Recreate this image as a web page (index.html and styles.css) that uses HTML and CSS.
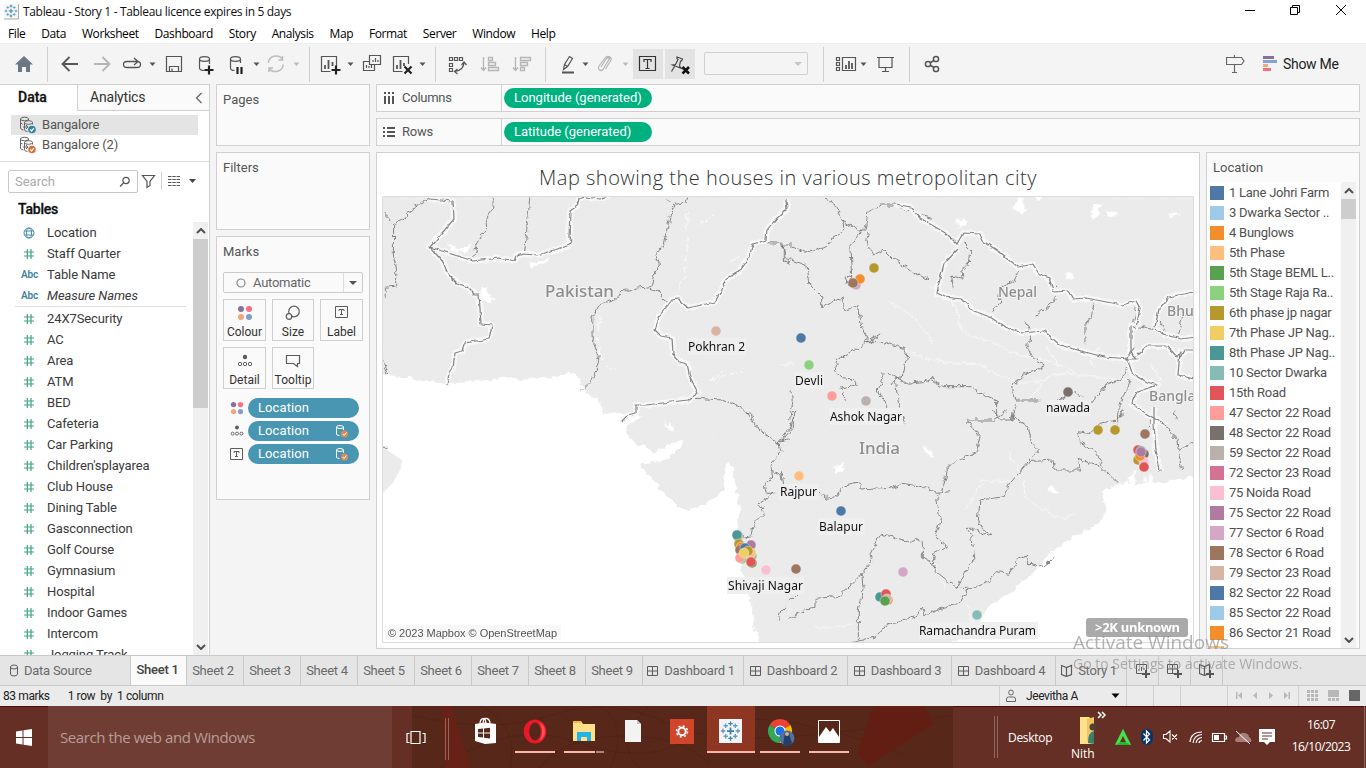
FILE: index.html
```html
<!DOCTYPE html>
<html lang="en">
<head>
<meta charset="utf-8">
<title>Tableau - Story 1</title>
<link rel="stylesheet" href="styles.css">
</head>
<body>
<svg class="defs" width="0" height="0">
  <defs>
    <symbol id="num" viewBox="0 0 12 12"><path d="M1 4h10M1 8h10M4.300 1v10M8 1v10" fill="none" stroke="#3fa582" stroke-width="1.200"/></symbol>
    <symbol id="globe" viewBox="0 0 12 12"><g fill="none" stroke="#4a8ba5"><circle cx="6" cy="6" r="5"/><ellipse cx="6" cy="6" rx="2.500" ry="5"/><path d="M1.500 4h9M1.500 8h9"/></g></symbol>
    <symbol id="dots" viewBox="0 0 16 16"><circle cx="4" cy="4" r="3" fill="#8a6f9a"/><circle cx="12" cy="4" r="3" fill="#fa6e82"/><circle cx="4" cy="12" r="3" fill="#f2a77c"/><circle cx="12" cy="12" r="3" fill="#7f9fc8"/></symbol>
    <symbol id="detail" viewBox="0 0 16 16"><circle cx="8" cy="4" r="2.200" fill="#5c5c5c"/><g fill="none" stroke="#5c5c5c"><circle cx="3" cy="11" r="1.700"/><circle cx="8" cy="11" r="1.700"/><circle cx="13" cy="11" r="1.700"/></g></symbol>
    <symbol id="tbox" viewBox="0 0 14 14"><path d="M.5 1.500h12v11H.5zM4 6V4.500h5V6M6.500 4.500v5M5 9.500h3" fill="none" stroke="#5c5c5c"/></symbol>
    <symbol id="dbcheck" viewBox="0 0 14 14"><path d="M1.500 3v7q0 1.500 3 1.500M1.500 3q0-1.500 3.500-1.500T8.500 3v3M1.500 3q0 1.500 3.500 1.500T8.500 3" fill="none" stroke="#fff"/><circle cx="9.500" cy="10" r="3.600" fill="#d98b59"/><path d="m7.800 10 1.300 1.400L11.500 8.500" fill="none" stroke="#fff"/></symbol>
    <symbol id="ds" viewBox="0 0 18 18"><g fill="none" stroke="#666"><ellipse cx="5.500" cy="3" rx="4" ry="1.800"/><path d="M1.500 3v9q0 1.500 3 2M9.500 3v1.500M1.500 7l2 1"/><ellipse cx="9.500" cy="6.500" rx="4" ry="1.800"/><path d="M5.500 6.500v7q0 2 3 2M13.500 6.500v2M4 11h5M7 9l2 2-2 2"/></g><circle cx="13" cy="13.500" r="3.800" fill="var(--badge)"/><path d="m11.200 13.500 1.400 1.500 2.300-2.800" fill="none" stroke="#fff" stroke-width="1.200"/></symbol>
    <symbol id="dash" viewBox="0 0 12 12"><path d="M.5 1.500h10v9H.5zM5.500 1.500v9M.5 6h10" fill="none" stroke="#5c5c5c"/></symbol>
    <symbol id="book" viewBox="0 0 12 13"><path d="m.5 1.500 5 2 5-2v9l-5 2-5-2zM5.500 3.500v9" fill="none" stroke="#5c5c5c" stroke-width="1.200"/></symbol>
    <symbol id="plus" viewBox="0 0 8 8"><path d="M4 0v8M0 4h8" stroke="#555" stroke-width="2"/></symbol>
    <symbol id="tab" viewBox="-12 -12 24 24"><g stroke-width="1.500"><path d="M0-4v8M-4 0h8" stroke="#3c82ad" stroke-width="2"/><path d="M0-11v5M-2.500-8.500h5M0 6v5M-2.500 8.500h5" stroke="#477fa6"/><path d="M-11 0h5M-8.500-2.500v5M6 0h5M8.500-2.500v5" stroke="#6796b8"/><path d="M-8-6h5M-5.500-8.500v5M3-6h5M5.500-8.500v5M-8 6h5M-5.500 3.500v5M3 6h5M5.500 3.500v5" stroke="#5ba1cb"/></g></symbol>
    <symbol id="up" viewBox="0 0 10 6"><path d="m1 5 4-4 4 4" fill="none" stroke="#505050" stroke-width="2"/></symbol>
    <filter id="jag" x="-5%" y="-5%" width="110%" height="110%"><feTurbulence type="fractalNoise" baseFrequency=".16" numOctaves="2" seed="4"/><feDisplacementMap in="SourceGraphic" scale="7" xChannelSelector="R" yChannelSelector="G"/></filter>
    <filter id="soft" x="-5%" y="-5%" width="110%" height="110%"><feTurbulence type="fractalNoise" baseFrequency=".16" numOctaves="2" seed="4"/><feDisplacementMap in="SourceGraphic" scale="4" xChannelSelector="R" yChannelSelector="G"/></filter>
    <filter id="relief" x="0" y="0" width="100%" height="100%"><feTurbulence type="fractalNoise" baseFrequency=".018 .022" numOctaves="4" seed="9"/><feColorMatrix values="0 0 0 0 .82  0 0 0 0 .82  0 0 0 0 .82  1.600 0 0 0 -.62"/></filter>
  </defs>
</svg>

<header class="titlebar">
  <svg class="logo" width="17" height="17" viewBox="0 0 17 17"><path d="M.5.500h15v15H.5z" fill="#f7f7f7"/><path d="M15.500 1v15H1" fill="none" stroke="#aaa"/><use href="#tab" x="1" y="1" width="14" height="14"/></svg>
  <span class="apptitle">Tableau - Story 1 - Tableau licence expires in 5 days</span>
  <svg class="winctl" width="116" height="24" viewBox="1238 0 116 24"><path d="M1245 10.500h10M1290.500 7.500h7v7h-7zM1292.500 7.500v-2h7v7h-2M1336 5l10 10M1346 5l-10 10" fill="none" stroke="#000"/></svg>
</header>
<nav class="menu"><span>File</span><span>Data</span><span>Worksheet</span><span>Dashboard</span><span>Story</span><span>Analysis</span><span>Map</span><span>Format</span><span>Server</span><span>Window</span><span>Help</span></nav>

<div class="toolbar">
  <svg width="48" height="41" viewBox="0 43 48 41"><path d="m24 56 9 8.500h-3V72h-4v-5h-4v5h-4v-7.500h-3z" fill="#6b7785"/><path d="M47.500 47v35" stroke="#cfcfcf"/></svg>
  <svg width="262" height="41" viewBox="48 43 262 41">
    <g fill="none" stroke="#555" stroke-width="1.200">
      <path d="M78 64H63M69.500 57 62.500 64l7 7" stroke-width="1.800"/><path d="M94 64h15M102.500 57l7 7-7 7" stroke="#b5b5b5" stroke-width="1.800"/>
      <path d="M133 67.500h4q3.500 0 3.500-3t-3.500-3M130 67.500h-3q-3.500 0-3.500-3t3.500-3h10M134 58l4 3.500-4 3.500M130 67.500h4" stroke-width="1.300"/>
      <path d="M166.500 56.500h15v15h-15zM169.500 71v-4.500h9V71M172 71v-2.500"/>
      <path d="M199.500 59v9q0 2.500 5 2.500M199.500 59q0-2.300 5-2.300t5 2.300v5M199.500 59q0 2.300 5 2.300t5-2.300"/><path d="M204.500 70h9M209 65.500v9" stroke="#222" stroke-width="2.200"/>
      <path d="M230.500 59v9q0 2.500 4 2.500M230.500 59q0-2.300 5-2.300t5 2.300v4M230.500 59q0 2.300 5 2.300t5-2.300"/><path d="M237.500 67v7M241.500 67v7" stroke="#222" stroke-width="2.200"/>
      <path d="M268.500 63a7.500 7 0 0 1 14-3.500M282.500 56v4h-4M283 64.500a7.500 7 0 0 1-14 3.500M269 72v-4h4" stroke="#bcbcbc" stroke-width="1.500"/>
    </g>
    <path d="M149.500 62.500h6l-3 3.500zM253.500 62.500h6l-3 3.500z" fill="#555"/><path d="M293.500 62.500h6l-3 3.500z" fill="#bbb"/><path d="M309.500 47v35" stroke="#cfcfcf"/>
  </svg>
  <svg width="126" height="41" viewBox="310 43 126 41">
    <g fill="none" stroke="#555" stroke-width="1.200">
      <path d="M336.500 66V56.500h-15v15h9"/><path d="M325 69v-4M328.500 69v-9M332.500 66v-4" stroke-width="1.800"/><path d="M331.500 70h9M336 65.500v9" stroke="#222" stroke-width="2.200"/>
      <path d="M369.500 55.500h11v9h-11zM369 61.500h-5.500v9h11V65M373 62v-2M375.500 62v-4M378 62v-2M366.500 68v-3M369 68v-2M371.500 68v-3"/>
      <path d="M408.500 64v-7.500h-15v15h9"/><path d="M397 69v-4M400.500 69v-9M404 66v-3" stroke-width="1.800"/><path d="m404.500 66.500 7 7m0-7-7 7" stroke="#222" stroke-width="2.200"/>
    </g><path d="M347.500 62.500h6l-3 3.500zM419.500 62.500h6l-3 3.500z" fill="#555"/><path d="M435.500 47v35" stroke="#cfcfcf"/>
  </svg>
  <svg width="110" height="41" viewBox="436 43 110 41">
    <g fill="none" stroke="#555">
      <path d="M449.500 57.500h3v3h-3zM454.500 57.500h3v3h-3zM459.500 57.500h3v3h-3zM449.500 63.500h3v3h-3zM449.500 68.500h3v3h-3zM464 62q0 8-9 9.500M461.500 65l2.500-3 2.500 3M457.500 69l-3 2.500 3 2.500" stroke-width="1.200"/>
      <g stroke="#b5b5b5" stroke-width="1.300"><path d="M483.500 57v13M481 67.500l2.500 3 2.500-3M488.500 57.500h4v3h-4zM488.500 62.500h7v3h-7zM488.500 67.500h10v3h-10zM515.500 57v13M513 67.500l2.500 3 2.500-3M520.500 57.500h10v3h-10zM520.500 62.500h7v3h-7zM520.500 67.500h4v3h-4z"/></g>
    </g><path d="M545.500 47v35" stroke="#cfcfcf"/>
  </svg>
  <svg width="158" height="41" viewBox="546 43 158 41">
    <path d="M633 49h30v30h-30zM665 49h30v30h-30z" fill="#e3e3e3"/>
    <g fill="none" stroke="#555" stroke-width="1.200"><path d="m563.500 69.500 1-5 5-8 3 2-5 8zM564.500 64.500l3 2"/><path d="M562 72.500h12" stroke-width="2"/>
      <path d="m601 67 5.500-8.500q1.500-1.500 3 0l-6.500 11q-2 2-4 0-1-2 0-3.500l6-8q2-2.500 5-1 2 2 .5 4l-5 8" stroke="#b5b5b5"/>
      <path d="M639.500 56.500h16v14h-16zM644 62v-2.500h7V62M647.500 59.500v9M645.500 68.500h4" stroke="#333"/>
      <path d="m677 57 5.500 2-1 2h-1l-1 5 2 2.500-9-3.500 3-.5 2.500-5-1-1zM674.500 66.500l-3 5" stroke="#444"/><path d="m682.500 67 6.500 6.500m0-6.500-6.500 6.500" stroke="#111" stroke-width="2.500"/></g>
    <path d="M582.500 62.500h6l-3 3.500z" fill="#555"/><path d="M622.500 62.500h6l-3 3.500z" fill="#bbb"/>
  </svg>
  <div class="combo"><i class="caret"></i></div>
  <svg class="tail" width="132" height="41" viewBox="823 43 132 41"><path d="M823.500 47v35M909.500 47v35" stroke="#cfcfcf"/>
    <g fill="none" stroke="#555" stroke-width="1.200"><path d="M836.500 57.500h3v3h-3zM836.500 62.500h3v3h-3zM836.500 67.500h3v3h-3zM842.500 57.500h13v13h-13z"/><path d="M846 69v-4M849 69v-8M852 69v-6" stroke-width="1.800"/><path d="M877 57.500h17M879 58v9.500h13V58M885.500 67.500v4M882 71.500h7"/><g stroke-width="1.500"><circle cx="928" cy="64" r="2.600"/><circle cx="936" cy="59" r="2.600"/><circle cx="936" cy="69" r="2.600"/><path d="m930.500 62.500 3.500-2M930.500 65.500l3.500 2"/></g></g><path d="M860.500 62.500h6l-3 3.500z" fill="#555"/></svg>
  <svg class="guide" width="52" height="41" viewBox="1226 43 52 41"><path d="M1226.500 57.500h15l2.500 3.500-2.500 3.500h-15zM1234.500 55v2M1234.500 65v7M1232 72.500h5" fill="none" stroke="#666" stroke-width="1.200"/><path d="M1263 56h11v3h-11z" fill="#87719a"/><path d="M1263 60h14v3h-14z" fill="#82a3cd"/><path d="M1263 64h5v3h-5z" fill="#f5a97f"/><path d="M1263 68h8v3h-8z" fill="#fb6b80"/></svg>
  <span class="showme">Show Me</span>
</div>

<main class="work">
  <aside class="data">
    <div class="dtabs"><b>Data</b><span>Analytics<svg width="8" height="12" viewBox="0 0 8 12"><path d="M6.500 1 1.500 6l5 5" fill="none" stroke="#666" stroke-width="1.300"/></svg></span></div>
    <div class="sources">
      <div class="src sel"><svg class="blue" width="18" height="18"><use href="#ds"/></svg>Bangalore</div>
      <div class="src"><svg class="orange" width="18" height="18"><use href="#ds"/></svg>Bangalore (2)</div>
    </div>
    <div class="searchrow">
      <div class="search">Search<svg width="12" height="12" viewBox="0 0 12 12"><circle cx="7" cy="4.500" r="3.200" fill="none" stroke="#555" stroke-width="1.200"/><path d="M4.500 7 1 10.500" stroke="#555" stroke-width="1.300"/></svg></div>
      <svg width="58" height="24" viewBox="140 170 58 24"><path d="M142.500 175.500h12l-4.500 6v4l-3 2v-6z" fill="none" stroke="#555" stroke-width="1.200"/><path d="M161.500 172v18" stroke="#d0d0d0"/><path d="M168 176.500h12M168 179.500h12M168 182.500h12M168 185.500h12" stroke="#555" stroke-dasharray="3.500 .8"/><path d="M189 179h7l-3.500 4z" fill="#444"/></svg>
    </div>
    <h2>Tables</h2>
    <div class="fieldwrap">
      <ul class="fields">
        <li><svg><use href="#globe"/></svg>Location</li><li><svg><use href="#num"/></svg>Staff Quarter</li><li><b>Abc</b>Table Name</li><li class="mn"><b>Abc</b><i>Measure Names</i></li>
        <li><svg><use href="#num"/></svg>24X7Security</li><li><svg><use href="#num"/></svg>AC</li><li><svg><use href="#num"/></svg>Area</li><li><svg><use href="#num"/></svg>ATM</li><li><svg><use href="#num"/></svg>BED</li><li><svg><use href="#num"/></svg>Cafeteria</li><li><svg><use href="#num"/></svg>Car Parking</li><li><svg><use href="#num"/></svg>Children'splayarea</li><li><svg><use href="#num"/></svg>Club House</li><li><svg><use href="#num"/></svg>Dining Table</li><li><svg><use href="#num"/></svg>Gasconnection</li><li><svg><use href="#num"/></svg>Golf Course</li><li><svg><use href="#num"/></svg>Gymnasium</li><li><svg><use href="#num"/></svg>Hospital</li><li><svg><use href="#num"/></svg>Indoor Games</li><li><svg><use href="#num"/></svg>Intercom</li><li><svg><use href="#num"/></svg>Jogging Track</li>
      </ul>
      <div class="scroll"><svg width="10" height="6"><use href="#up"/></svg><i></i><svg class="down" width="10" height="6"><use href="#up"/></svg></div>
    </div>
  </aside>

  <section class="cards">
    <div class="card pages">Pages</div>
    <div class="card filters">Filters</div>
    <div class="card marks">Marks
      <div class="select"><svg width="10" height="10" viewBox="0 0 10 10"><circle cx="5" cy="5" r="4" fill="none" stroke="#888" stroke-width="1.200"/></svg><span>Automatic</span><i class="caret"></i></div>
      <div class="btns">
        <div><svg width="16" height="16"><use href="#dots"/></svg>Colour</div>
        <div><svg width="16" height="16" viewBox="0 0 16 16"><g fill="none" stroke="#5c5c5c" stroke-width="1.200"><circle cx="9" cy="6.500" r="5.300"/><circle cx="4" cy="11.500" r="2.800" fill="#fafafa"/></g></svg>Size</div>
        <div><svg width="14" height="14"><use href="#tbox"/></svg>Label</div>
        <div><svg width="16" height="16"><use href="#detail"/></svg>Detail</div>
        <div><svg width="16" height="16" viewBox="0 0 16 16"><path d="M1.500 2.500h13v8h-2v3l-4-3h-7z" fill="none" stroke="#5c5c5c" stroke-width="1.200"/></svg>Tooltip</div>
      </div>
      <div class="mrow"><svg width="16" height="16"><use href="#dots"/></svg><div class="pill">Location</div></div>
      <div class="mrow"><svg width="16" height="16"><use href="#detail"/></svg><div class="pill">Location<svg width="14" height="14"><use href="#dbcheck"/></svg></div></div>
      <div class="mrow"><svg width="14" height="14"><use href="#tbox"/></svg><div class="pill">Location<svg width="14" height="14"><use href="#dbcheck"/></svg></div></div>
    </div>
  </section>

  <section class="sheet">
    <div class="shelf"><div class="sname"><svg width="12" height="12" viewBox="0 0 12 12"><path d="M2 4v8M6 4v8M10 4v8M2 0v2M6 0v2M10 0v2" stroke="#555" stroke-width="2"/></svg>Columns</div><div class="gpill">Longitude (generated)</div></div>
    <div class="shelf"><div class="sname"><svg width="12" height="12" viewBox="0 0 12 12"><path d="M4 2h8M4 6h8M4 10h8M0 2h2M0 6h2M0 10h2" stroke="#555" stroke-width="1.800"/></svg>Rows</div><div class="gpill">Latitude (generated)</div></div>
    <div class="viewrow">
      <div class="view">
        <h1>Map showing the houses in various metropolitan city</h1>
        <svg class="map" width="812" height="447" viewBox="382 196 812 447">
          <path d="M382 196h813v448H382z" fill="#ebebeb"/>
          <path d="M382 196h813v448H382z" filter="url(#relief)" opacity=".45"/>
          <g filter="url(#jag)" fill="#fff">
            <path transform="translate(376 190) scale(.3333)" d="M-20 550 20 555 60 558 75 562 100 560 130 572 180 575 215 587 240 575 300 573 370 568 400 560 430 570 500 565 560 558 575 547 600 552 615 575 620 600 640 615 665 625 670 665 682 690H-20z"/>
            <path transform="translate(376 410) scale(.3333)" d="M-20-20H672L680 12 730 10 800 20 760 40 755 70 775 100 840 125 890 100 925 92 905 120 870 150 810 160 790 160 800 180 840 220 880 265 910 290 940 300 980 285 1020 260 1045 240 1045 180 1055 155 1070 175 1080 230 1092 300 1085 345 1075 380 1085 440 1100 490 1115 550 1130 620 1140 670 1155 720H-20z"/>
            <path transform="translate(780 410) scale(.3333)" d="M500 720 540 680 600 640 615 600 640 580 690 550 720 515 760 490 800 440 830 415 870 385 900 370 935 355 965 325 980 300 970 265 975 240 1000 230 1020 225 1045 215 1065 180 1070 222 1090 222 1092 190 1100 225 1110 190 1125 222 1160 215 1200 205 1260 198V720z"/>
            <g transform="translate(376 190) scale(.3333)"><path d="m210 155 20 15 30 5 25-15-10 25-45 0zM460 215l20 5 50-20-30 25-35 12zM310 295l20-5 5 20 25 15-20 15-25-12zM865 695l20 15 10 15-20-5z"/></g>
            <g transform="translate(780 190) scale(.3333)"><path d="m525 90 30-5 5 15-20 15zM700 55l15-30 15-10-5 25 20 20-20 10zM930 80l10-35 25-5-10 30-15 18zM975 60l25 5 15 12-25 3zM860 250l12-5 3 20-10 5zM765 10l20 0 5 15-20 5zM1175 65l25 10-30 5zM450 5l20 15-20-5zM160 835l30-20 0 25-20 10zM425 765l25 15 10 25-20-10zM805 890l15 0 15 15-15 10zM850 670l10 0-20-5z"/></g>
          </g>
          <path transform="translate(376 410) scale(.3333)" d="m20 108 20 17 38 25-3 25-25 45-30 30z" fill="#ebebeb"/>
          <g fill="none" stroke="#fafafa" filter="url(#jag)">
            <g transform="scale(.3333)" stroke-width="3">
              <path d="M2060 640q5 100-5 190-20 30-30 70M1800 945q-10 60 0 120 10 30 50 50M2140 640q-20 30-50 40M2220 770l-30 15M2140 1160q30-50 100-40M2130 1145l50-35" stroke-dasharray="50 14 20 10"/>
              <path transform="translate(2340 570)" d="M325 335Q410 370 460 465M450 290q80 20 85 100 10 40 40 50 70 10 110 45 60 20 115 25l90 35M370 475q80 50 220 45 60 40 140 60l60-10q50-30 110-15l150 15M940 530q-20-40 25-60M835 530q-10-40-40-60M745 630l60-70M730 870q-30-60-50-90M600 873h95M735 870q-10 60 20 70 50 30 90 45l40-10M555 960q20-30 60-90M500 1205l-40-90M560 1240l30 80M0 525l45-5M1110 520l40 60M100 1310q80 10 120-10"/>
            </g>
          </g>
          <g fill="none" stroke="#7c7c7c" filter="url(#jag)">
            <g transform="translate(376 190) scale(.3333)" stroke-width="2.800">
              <path d="M20 65 53 102 90 85 92 70 115 60 120 45 160 28M53 102 52 195 62 240 62 288 25 292 28 320M352 18 350 60 330 90 332 115 300 165 292 210M462 18 445 195M890 50 880 90 870 130 862 165 840 195 850 225 832 260 825 290 750 298 715 330 670 345 650 380 652 455 670 500 660 545 640 580 615 605M825 295 850 305 860 330 880 345M890 50 905 40 930 40 935 20M890 50 870 28M20 510 38 555M1172 158l50 2 0 50 20 10M960 625l80 5 40 15 50 30 5 20M1245 600l5 40-10 50M20 775h15"/>
              <path d="m1110 660 30 50 70 55 5 20-30 40 5 40-25 20 5 25 25 0-45 30 15 30-25 25-10 15-5 30-20 5-15-25M1260 660l-15 50-40 50M1195 850l20 5 5 30M1205 1295l10-35 30-30 15-15"/>
            </g>
            <g transform="translate(780 190) scale(.3333)" stroke-width="2.800">
              <path d="m135 25 30 20 20 45 50 30 20 0 10-60 40-15 40 0 60 25 50 15M185 90l10 25-35 30-20 25-65 20-40-25L0 165M10 165l5 40 65 20 10 60 35 35 0 30 30-10 30-20 10 40 40-10 10 60 20 35-15 10 60 0 60 20 10 20-10 60-40 30M245 120l-35 50 5 90-10 25-10-20 20-10M265 125l-5 30 15 40 40-15 25 25 50 35 55 30M300 430l-60 40-70 40-5 25 15 30 40 5 10 15-50 10 20 40M320 545l60 35 50-5 20-10 40 25 80 0 30 20 50 20 0 50M310 550l-15 50 25 50-10 50M345 560l10 80 20 60M735 390l20 60-15 15 15 35 40 30-60 20-40 40 10 40 70 0M710 640l-15 50M810 640l40-15 30-20 30 15M860 640l70 5 50-60 50-20M1050 570l-20 50-15 40-5 40M550 160l20 20-5 40-20 20 5 25-35-10 5 40M718 235l-20 40-35 15-5 50-20 25M830 290l-5 40-60 50M945 330l-10 40-20 40 0 50M1070 345l-10 60 60 10M1140 390l20 50M1210 375l-20 70M1030 565l30-80"/>
            </g>
            <g transform="translate(780 410) scale(.3333)" stroke-width="2.800">
              <path d="m40 0 0 50-40 50M120 245l15 20 30-5 30-35 45-10 0 25 90-5 40-15 60 10 40 20 40-5M485 245l15-65 30-30 60-25 10-45-40-50 80 0 40-30M640 0l20 30 35 0 5-30M700 20l45 30 10 50 20 20-25 30-60 70-20 40-70 10-5 60 10 30 30 10-25 5-30-20-20 0 15 20 10 75-25 30-30 55M745 155l75-5 5 30 75 0-5-35 35 15 30 10 55 50M1030 0l-20 30-50 10M960 40l-30 30-40-5 5 30 45 25 20 30 10 20M485 245l-15 15 10 70-15 50 40 30-40 20-10 35 20 25 55 45 50 0 40-20 30-30 40 5 20-40 25-10 15 20 40 10 30-25M455 460l-25-20 0-45-20-10-25 10-80-25-20 30-15 30 5 25-30 40-20 20-50 45-70 5 0 30-30 5-50 30M245 490l5 50-15 60 0 90M560 540l-15 30-30 15-80 30-10-20-15 20-50 20-40 10-30 35-80 20M0 95l30-10M0 180l10 30M1110 30l15 60 10 90M1160 50l30 40 15 90M1180 0l10 30M1240 100l-40 20"/>
            </g>
          </g>
          <g fill="none" filter="url(#soft)" stroke-linejoin="round">
            <g stroke="#f7f7f7" stroke-width="6"><use href="#west"/><use href="#east"/></g>
            <g stroke="#858585" stroke-width="1.200">
            <path id="west" transform="translate(376 190)" d="m53 9 24 2 1 18-24 28 43 14 26-3 16 3 2-5 6-2 14 1 31-9 3-5-2-3 1-27 7-5 2-7 6-2 15 2 9-4-5-5M54 57l13 15 5 12 9 9 10 4 7 7 5 0 2 30 11 1-3 14-24 4-3 8-7 2-2 15-4 5-2 12M410 9l1 10-12 11-8 10-1 10-13 4-4 13-9 14-14 8-5 12-6 11-27 6-10-9-6 1-12 15-5 15 6 6 11 2 1 16 7 8 7 2 3 13 8 16-10 7-42 5-10 0 0 9-9 2-6 6"/>
            <path id="east" transform="translate(780 190)" d="m116 14 14 3 10 11 27 16 10 10 6-11 17 1 3 7 18 12 17 14 15-3 6 10 10 4 3 9 2 5 14-1 5 8 13-1 36 7 14-4 4 7-4 20-5-2 0 27 6 6-8 0-24-2-17-4-28-8-16-14-22 2-17-6-15-10-16-6-13-12-16-2-8-4 3-15 4-14 14-15M355 157l-8 10 5 16 15 9 10 3-20 7-5 12 15 10 20 12M357 165l10-9 20 0 10 11 3-5-2 23 20 5M375 139l8 5 18 5 15-2M375 137l4-18 10-12 25-5M374 217l0 18 2 25 4 20M399 170l5-10 12 0"/>
            </g>
          </g>
          <g class="country"><text x="545" y="297" textLength="69">Pakistan</text><text x="859" y="454" textLength="41">India</text><g class="small"><text x="998" y="297" textLength="39">Nepal</text><text x="1167" y="316">Bhutan</text><text x="1149" y="401">Bangladesh</text></g></g>
          <g class="lblbg"><path d="M687 338h59v17h-59zM794 372h30v17h-30zM829 408h74v17h-74zM1046 400h45v16h-45zM779 484h40v16h-40zM818 518h47v17h-47zM727 577h77v17h-77zM919 622h119v17H919z"/></g>
          <g class="lbl"><text x="688" y="351" textLength="57">Pokhran 2</text><text x="795" y="385" textLength="28">Devli</text><text x="830" y="421" textLength="72">Ashok Nagar</text><text x="1046" y="412" textLength="44">nawada</text><text x="780" y="496" textLength="37">Rajpur</text><text x="819" y="531" textLength="44">Balapur</text><text x="728" y="590" textLength="75">Shivaji Nagar</text><text x="919" y="635" textLength="117">Ramachandra Puram</text></g>
          <g class="pts">
            <circle cx="716" cy="331" r="5" fill="#d7b5a6"/><circle cx="801" cy="338" r="5" fill="#4e79a7"/><circle cx="809" cy="365" r="5" fill="#8cd17d"/><circle cx="832" cy="396" r="5" fill="#ff9d9a"/><circle cx="866" cy="401" r="5" fill="#bab0ac"/><circle cx="874" cy="268" r="5" fill="#b6992d"/><circle cx="856" cy="285" r="5" fill="#d4a6c8"/><circle cx="860" cy="279" r="5" fill="#f28e2b"/><circle cx="853" cy="283" r="5" fill="#9d7660"/><circle cx="1068" cy="392" r="5" fill="#79706e"/><circle cx="1098" cy="430" r="5" fill="#b6992d"/><circle cx="1115" cy="430" r="5" fill="#b6992d"/><circle cx="1145" cy="434" r="5" fill="#9d7660"/>
            <circle cx="1138" cy="460" r="5" fill="#b6992d"/><circle cx="1144" cy="454" r="5" fill="#79706e"/><circle cx="1138" cy="450" r="5" fill="#e15759"/><circle cx="1141" cy="451" r="5" fill="#499894"/><circle cx="1144" cy="462" r="5" fill="#fabfd2"/><circle cx="1140" cy="456" r="5" fill="#f28e2b"/><circle cx="1141" cy="452" r="5" fill="#b07aa1"/><circle cx="1144" cy="467" r="5" fill="#e15759"/>
            <circle cx="799" cy="476" r="5" fill="#ffbe7d"/><circle cx="841" cy="511" r="5" fill="#4e79a7"/><circle cx="796" cy="569" r="5" fill="#9d7660"/><circle cx="766" cy="570" r="5" fill="#fabfd2"/><circle cx="903" cy="572" r="5" fill="#d4a6c8"/><circle cx="977" cy="615" r="5" fill="#86bcb6"/>
            <circle cx="738" cy="537" r="5" fill="#bab0ac"/><circle cx="737" cy="535" r="5" fill="#499894"/><circle cx="739" cy="544" r="5" fill="#b6992d"/><circle cx="741" cy="547" r="5" fill="#f28e2b"/><circle cx="740" cy="550" r="5" fill="#9d7660"/><circle cx="751" cy="545" r="5" fill="#b07aa1"/><circle cx="742" cy="559" r="5" fill="#8cd17d"/><circle cx="752" cy="556" r="5" fill="#8cd17d"/><circle cx="740" cy="558" r="5" fill="#ff9d9a"/><circle cx="751" cy="553" r="5" fill="#ffbe7d"/><circle cx="752" cy="563" r="5" fill="#59a14f"/><circle cx="751" cy="562" r="5" fill="#e15759"/><circle cx="745" cy="548" r="5" fill="#4e79a7"/><circle cx="748" cy="551" r="5" fill="#b6992d"/><circle cx="744" cy="553" r="5" fill="#f1ce63"/>
            <circle cx="888" cy="600" r="5" fill="#f28e2b"/><circle cx="880" cy="597" r="5" fill="#499894"/><circle cx="886" cy="594" r="5" fill="#e15759"/><circle cx="887" cy="599" r="5" fill="#d7b5a6"/><circle cx="885" cy="601" r="5" fill="#59a14f"/>
          </g>
          <path d="M385 625h176v15H385z" fill="#f8f8f8"/><text class="copy" x="388" y="637" textLength="169">© 2023 Mapbox © OpenStreetMap</text>
          <rect x="1086" y="618" width="102" height="19" rx="3" fill="#aaa"/><text class="unk" x="1095" y="632" textLength="85">&gt;2K unknown</text>
          <path d="M382.500 196.500h811v446h-811z" fill="none" stroke="#dcdcdc"/>
        </svg>
      </div>
      <div class="legend">
        <div class="lhead">Location</div>
        <div class="lbody">
          <ul><li class="k1">1 Lane Johri Farm</li><li class="k2">3 Dwarka Sector ..</li><li class="k3">4 Bunglows</li><li class="k4">5th Phase</li><li class="k5">5th Stage BEML L..</li><li class="k6">5th Stage Raja Ra..</li><li class="k7">6th phase jp nagar</li><li class="k8">7th Phase JP Nag..</li><li class="k9">8th Phase JP Nag..</li><li class="k10">10 Sector Dwarka</li><li class="k11">15th Road</li><li class="k12">47 Sector 22 Road</li><li class="k13">48 Sector 22 Road</li><li class="k14">59 Sector 22 Road</li><li class="k15">72 Sector 23 Road</li><li class="k16">75 Noida Road</li><li class="k17">75 Sector 22 Road</li><li class="k18">77 Sector 6 Road</li><li class="k19">78 Sector 6 Road</li><li class="k20">79 Sector 23 Road</li><li class="k1">82 Sector 22 Road</li><li class="k2">85 Sector 22 Road</li><li class="k3">86 Sector 21 Road</li><li class="k4"></li></ul>
          <div class="scroll"><svg width="10" height="6"><use href="#up"/></svg><i></i><svg class="down" width="10" height="6"><use href="#up"/></svg></div>
        </div>
      </div>
    </div>
  </section>
</main>

<nav class="tabs">
  <span class="t-src"><svg width="10" height="13" viewBox="0 0 10 13"><path d="M1.500 3v7q0 2 3.500 2t3.500-2V3M1.500 3q0-2 3.500-2t3.500 2q0 2-3.500 2T1.500 3" fill="none" stroke="#5c5c5c"/></svg>Data Source</span>
  <span class="on">Sheet 1</span><span>Sheet 2</span><span>Sheet 3</span><span>Sheet 4</span><span>Sheet 5</span><span>Sheet 6</span><span>Sheet 7</span><span>Sheet 8</span><span>Sheet 9</span>
  <span class="d"><svg width="12" height="12"><use href="#dash"/></svg>Dashboard 1</span><span class="d"><svg width="12" height="12"><use href="#dash"/></svg>Dashboard 2</span><span class="d"><svg width="12" height="12"><use href="#dash"/></svg>Dashboard 3</span><span class="d"><svg width="12" height="12"><use href="#dash"/></svg>Dashboard 4</span>
  <span class="st"><svg width="12" height="13"><use href="#book"/></svg>Story 1</span>
  <span class="n"><svg width="16" height="16" viewBox="0 0 16 16"><path d="M11.500 7V1.500H1.500v9H7M4 8V6M6.500 8V4M9 7V5" fill="none" stroke="#5c5c5c"/><use href="#plus" x="7" y="7" width="8" height="8"/></svg></span>
  <span class="n"><svg width="16" height="16" viewBox="0 0 16 16"><use href="#dash" width="12" height="12"/><use href="#plus" x="7" y="7" width="8" height="8"/></svg></span>
  <span class="n"><svg width="16" height="16" viewBox="0 0 16 16"><use href="#book" width="12" height="13"/><use href="#plus" x="7" y="7" width="8" height="8"/></svg></span>
</nav>
<div class="status"><span>83 marks</span><span class="rc">1 row&nbsp; by&nbsp; 1 column</span>
  <div class="user"><svg width="12" height="14" viewBox="0 0 12 14"><path d="M6 1a2.300 2.500 0 1 1 0 5 2.300 2.500 0 1 1 0-5M1.500 12.500V10q0-2 2-2h5q2 0 2 2v2.500z" fill="none" stroke="#666"/></svg>Jeevitha A</div>
  <svg width="256" height="20" viewBox="1110 686 256 20"><path d="M1111.500 693.500h8l-4 4.500z" fill="#000"/><path d="M1126.500 686v20M1153.500 686v20M1180.500 686v20M1227.500 686v20M1298.500 686v20" stroke="#d0d0d0"/><path d="M1236 692h1.500v7h-1.500zM1242 692v7l-4-3.500zM1257 692v7l-4-3.500zM1269 692v7l4-3.500zM1284 692v7l4-3.500zM1288.500 692h1.500v7h-1.500z" fill="#b8b8b8"/><path d="M1307 690h3v3h-3zM1311 690h3v3h-3zM1315 690h3v3h-3zM1307 694h3v3h-3zM1311 694h3v3h-3zM1315 694h3v3h-3zM1307 698h3v3h-3zM1311 698h3v3h-3zM1315 698h3v3h-3zM1328 690h11v7h-11zM1328 698h3v3h-3zM1332 698h3v3h-3zM1336 698h3v3h-3z" fill="#b8b8b8"/><path d="M1349 690h11v11h-11z" fill="#666"/></svg>
</div>

<footer class="taskbar">
  <div class="start"><svg width="16" height="17" viewBox="0 0 16 17"><path d="m0 2.500 6.500-1V8H0zM7.500 1.300 16 0v8H7.500zM0 9h6.500v6.500L0 14.500zM7.500 9H16v8l-8.500-1.300z" fill="#fff"/></svg></div>
  <div class="tsearch">Search the web and Windows</div>
  <svg class="apps" width="561" height="62" viewBox="392 706 561 62">
    <path d="M392 706h20v62h-20z" fill="#662f25"/><path d="M412 706h541v62H412z" fill="#572719"/>
    <g fill="none" stroke="#4d2115" opacity=".6"><path d="M412 715q80 20 140 0t120 10 280-10M440 768q70-50 140-25t120-10 200 20M600 706q30 20 10 62M650 706q-40 35-10 62M540 768q20-30 80-32t90 28M480 706q40 20 30 62"/></g>
    <path d="m874 706 50 0 10 18-66 42-11-12 7-22z" fill="#641e13" opacity=".9"/><path d="m441 706 10 0 20 62-26 0z" fill="#6c2016" opacity=".8"/>
    <path d="M407.500 731.500h9v12h-9zM406 733.500h-2.500v9h2.500M419 733.500h2.500v9H419" fill="none" stroke="#fff" stroke-width="1.200" transform="translate(3.500 0)"/>
    <path d="M445.500 718v42M448.500 718v42" stroke="#8d665c"/>
    <path d="m475 725 10-1.500 11 1.500v19l-11 1-10-3z" fill="#fff" transform="translate(0 -1)"/><path d="M480 724q0-5.500 4-5.500 1.500 0 2 5.500M483 724q0-6 3.500-5.500 3.500 .5 3.500 5.500" fill="none" stroke="#fff" stroke-width="1.300"/><path d="m478 729 5-.5v4h-5zM484 728.400l6-.6v4.700h-6zM478 733.500h5v4l-5-.5zM484 733.500h6v5l-6-.8z" fill="#572719"/>
    <path d="M535 719.500a11.300 12 0 1 1 0 24 11.300 12 0 1 1 0-24zM535 722.500a5.800 9 0 1 0 0 18 5.800 9 0 1 0 0-18z" fill="#e8192c" fill-rule="evenodd"/><path d="M539 722q6 3 6 9.500t-6 9.500q3-4 3-9.500t-3-9.500z" fill="#ff5050"/>
    <path d="M573 721h8l2 3h12v17h-22z" fill="#ffe08a"/><path d="M573 721h8v2h-8z" fill="#f2bc3c"/><path d="M577 741v-9h14v9h-4v-4h-6v4z" fill="#20b4e8"/>
    <path d="M625 720h12l4 4v18h-16z" fill="#f3f3f3"/><path d="m637 720 0 4h4z" fill="#c5c5c5"/>
    <path d="M670 719h24v25h-24z" fill="#d1452b"/><circle cx="682" cy="731.500" r="3.700" fill="none" stroke="#fff" stroke-width="2"/><circle cx="682" cy="731.500" r="5.500" fill="none" stroke="#fff" stroke-width="1.600" stroke-dasharray="2 2.320"/>
    <path d="M707 706h48v47h-48z" fill="#8f3623"/><path d="M719 719h23v24h-23z" fill="#f2f5f8"/><use href="#tab" x="720" y="720" width="21" height="22"/>
    <path d="M780 731 769.600 725a12 12 0 0 1 20.800 0z" fill="#ea4335"/><path d="M780 731 790.400 725a12 12 0 0 1-10.400 18z" fill="#fbbc05"/><path d="M780 731v12a12 12 0 0 1-10.400-18z" fill="#34a853"/><circle cx="780" cy="731" r="5.500" fill="#fff"/><circle cx="780" cy="731" r="4.500" fill="#1a73e8"/><circle cx="787" cy="738" r="7.500" fill="#53719c"/><path d="M785 732h4l1 5 2 6-3 3h-6l1-7z" fill="#263d68"/><circle cx="787" cy="734" r="2" fill="#d5b090"/>
    <path d="M818.500 720.500h21v22h-21z" fill="none" stroke="#fff"/><path d="m819 737 7-10 4 5 3-4 6 9v6h-20z" fill="#fff"/>
    <path d="M515 751h40v2h-40zM564 751h31v2h-31zM707 751h48v2h-48zM760 751h40v2h-40zM809 751h40v2h-40z" fill="#ffb5a8"/><path d="M596 751h8v2h-8z" fill="#ad847c"/>
  </svg>
  <div class="tray">
    <svg class="split" width="6" height="42" viewBox="0 0 6 42"><path d="M.5 0v42M3.500 0v42" stroke="#8d665c"/></svg>
    <span class="desk">Desktop</span>
    <div class="nith"><svg width="32" height="38" viewBox="1078 708 32 38"><path d="M1080 717h9l5 4v23h-14z" fill="#ffe08a"/><path d="M1087 719l7-2v27l-7-3z" fill="#efc562"/><circle cx="1093" cy="727" r="3.500" fill="#4d4038"/><path d="M1094 731q-6 1-6 12l6 1z" fill="#38806a"/><path d="m1098 712 3 3-3 3M1102 712l3 3-3 3" fill="none" stroke="#fff" stroke-width="1.500"/></svg><span>Nith</span></div>
    <svg class="icons" width="164" height="24" viewBox="1114 725 164 24">
      <path d="m1123 729 8 16h-16z" fill="#1db92f"/><path d="m1123 729 8 16-8-4-8 4z" fill="#44e04e"/><path d="m1123 736 3 6h-6z" fill="#662f25"/>
      <rect x="1141" y="729" width="12" height="16" rx="6" fill="#0a3566"/><path d="m1143.500 733.500 6 6.500-3 3v-12l3 3-6 6.500" fill="none" stroke="#fff" stroke-width="1.200"/>
      <path d="M1163.500 734.500h2.500l4-3.500v11l-4-3.500h-2.500zM1172 734.500l5 5m0-5-5 5" fill="none" stroke="#fff" stroke-width="1.100"/>
      <path d="M1190 742q1-10 12-10M1193 743q1-8 9-8.500M1196 743q1-5 6-5.500M1199 743q0-2 3-2.500" fill="none" stroke="#fff" stroke-width="1.200"/>
      <path d="M1212.500 733.500h12v8h-12zM1225 736h1.500v3h-1.500" fill="none" stroke="#fff" stroke-width="1.200"/><path d="M1214 735h5v5h-5z" fill="#fff"/>
      <path d="M1235 741q0-4 4-4 1-5 6-4 4 1 4 4 3 1 2 5h-14z" fill="#a57f78"/><path d="m1236 731 14 13" stroke="#fff"/>
      <path d="M1259 729h16v13h-5l-3 3-3-3h-5z" fill="#fff"/><path d="M1262 733h10M1262 736h10M1262 739h6" stroke="#662f25"/>
    </svg>
    <div class="clock"><span>16:07</span><span>16/10/2023</span></div>
    <i class="peek"></i>
  </div>
</footer>
<div class="activate"><b>Activate Windows</b><span>Go to Settings to activate Windows.</span></div>
</body>
</html>
```
FILE: styles.css
```css
*{box-sizing:border-box}
body{margin:0;width:1366px;height:768px;overflow:hidden;display:flex;flex-direction:column;background:#f4f4f4;font-family:Roboto,"Open Sans",sans-serif;font-size:13px;color:#333;position:relative}
svg{display:block;flex:none}
.defs{position:absolute}
ul{list-style:none;margin:0;padding:0}
.titlebar{height:24px;flex:none;background:#fff;display:flex;align-items:center;font:12px "Open Sans","Noto Sans",sans-serif;color:#111}
.logo{margin:0 3px 1px 3px}
.apptitle{letter-spacing:-.33px;padding-bottom:1px}
.winctl{margin-left:auto;margin-right:12px}
.menu{height:19px;flex:none;background:#fff;display:flex;align-items:center;gap:15.900px;padding-left:8px;font:12px "Open Sans","Noto Sans",sans-serif;letter-spacing:-.4px;color:#000}
.toolbar{height:41px;flex:none;display:flex;align-items:center;box-shadow:inset 0 1px #eee}
.combo{width:104px;height:23px;border:1px solid #d0d0d0;border-radius:2px;display:flex;align-items:center;justify-content:flex-end;padding-right:5px}
.caret{border:4px solid transparent;border-top-color:#555;border-bottom:0}
.combo .caret{border-top-color:#c5c5c5}
.tail{margin-left:15px}
.guide{margin-left:271px}
.showme{margin-left:5px;font-size:14px;color:#222;letter-spacing:-.3px}
.work{height:571px;flex:none;display:flex;gap:6px}
.data{width:210px;flex:none;background:#fff;border-right:1px solid #d0d0d0;border-top:1px solid #d0d0d0;display:flex;flex-direction:column}
.dtabs{display:flex;height:26px;flex:none;font-size:14px;line-height:25px}
.dtabs b{width:77px;padding-left:18px;color:#111;font-weight:500;-webkit-text-stroke:.3px #111}
.dtabs span{flex:1;border:1px solid #d0d0d0;border-width:0 0 1px 1px;background:#fafafa;padding:0 6px 0 12px;display:flex;justify-content:space-between;align-items:center;letter-spacing:-.2px}
.sources{height:51px;flex:none;padding:4px 11px 0;border-bottom:1px solid #ddd}
.src{height:20px;display:flex;align-items:center;gap:5px;padding:0 0 1px 8px;color:#555;letter-spacing:-.15px}
.sel{background:#e4e4e4}
.blue{--badge:#3383a6}.orange{--badge:#d96f35}
.searchrow{display:flex;padding:8px 8px 0;gap:2px;height:32px;flex:none}
.search{width:130px;height:23px;border:1px solid #c8c8c8;border-radius:2px;display:flex;align-items:center;justify-content:space-between;padding:0 6px;color:#aaa}
h2{margin:5px 0 0;padding-left:18px;height:23px;font:500 14px/20px Roboto,sans-serif;letter-spacing:-.2px;color:#111;-webkit-text-stroke:.3px #111;flex:none}
.fieldwrap{display:flex;flex:1;min-height:0}
.fields{width:193px;overflow:hidden;letter-spacing:-.1px}
.fields li{height:21px;display:flex;align-items:center;color:#3a3a3a;line-height:21px}
.fields li svg{width:12px;height:12px;margin:0 12px 0 23px}
.fields li b{width:26px;margin-left:21px;font-size:10px;color:#3d83a0;font-weight:600}
.fields .mn{height:23px;position:relative;align-items:flex-start}
.fields .mn::after{content:"";position:absolute;left:15px;right:7px;bottom:1px;border-top:1px solid #ddd}
.scroll{width:15px;background:#f0f0f0;display:flex;flex-direction:column;align-items:center;padding-top:6px}
.scroll i{width:15px;height:169px;background:#cdcdcd;margin-top:5px}
.scroll .down{transform:rotate(180deg);margin:auto 0 5px}
.cards{width:154px;flex:none;display:flex;flex-direction:column;gap:6px}
.card{border:1px solid #d0d0d0;background:#fafafa;padding:7px 6px;color:#555;line-height:16px}
.pages{height:62px}.filters{height:78px}.marks{height:264px}
.select{height:21px;width:140px;border:1px solid #ccc;border-radius:2px;margin-top:12px;display:flex;align-items:center;padding-left:12px;color:#666;letter-spacing:-.25px}
.select span{margin-left:7px;flex:1;line-height:19px;border-right:1px solid #ddd}
.select .caret{margin:0 5px}
.btns{display:grid;grid-template-columns:43px 42px 43px;column-gap:6px;row-gap:6px;margin:6px 0 9px}
.btns>div{height:42px;border:1px solid #d0d0d0;display:flex;flex-direction:column;align-items:center;justify-content:space-between;padding:5px 0 0;font-size:12px;line-height:16px;color:#333}
.mrow{display:flex;align-items:center;height:20px;margin-bottom:3px}
.mrow>svg{width:16px;height:14px;margin:0 3px 0 6px}
.pill{width:111px;height:20px;border-radius:10px;background:#4996b2;color:#fff;display:flex;justify-content:space-between;align-items:center;padding:0 10px;letter-spacing:.1px}
.sheet{width:984px;flex:none;display:flex;flex-direction:column;gap:6px}
.shelf{height:28px;flex:none;border:1px solid #d0d0d0;background:#fafafa;display:flex;align-items:center}
.sname{width:125px;height:100%;border-right:1px solid #d0d0d0;display:flex;align-items:center;gap:7px;padding:0 0 1px 6px;color:#555;letter-spacing:-.25px}
.gpill{margin-left:2px;width:148px;height:20px;border-radius:10px;background:#00b180;color:#fff;line-height:20px;padding-left:10px}
.viewrow{height:497px;display:flex;gap:6px}
.view{width:824px;border:1px solid #d0d0d0;background:#fff;padding:0 5px}
h1{margin:0;height:43px;padding-top:10px;font:300 20px/30px "Open Sans","Noto Sans",sans-serif;letter-spacing:.5px;color:#333;text-align:center;white-space:nowrap}
.country text{font:500 17px "Noto Sans",sans-serif;fill:#8d8d8d;stroke:#f3f3f3;stroke-width:2px;paint-order:stroke}
.country .small text{font-size:14px}
.lblbg{fill:#efefef}
.lbl text{font:12px "Noto Sans",sans-serif;fill:#111}
.pts circle{stroke:#f3f3f3;stroke-width:.4}
.copy{font:11px "Liberation Sans",sans-serif;fill:#555}
.unk{font:bold 13px "Noto Sans",sans-serif;fill:#fff}
.legend{width:154px;border:1px solid #d0d0d0;background:#fafafa;padding-right:3px}
.lhead{height:29px;line-height:29px;padding-left:6px;color:#555}
.lbody{height:466px;display:flex;background:#fff;overflow:hidden}
.lbody ul{flex:1;min-width:0;padding-top:1px;letter-spacing:-.25px}
.lbody li{height:20px;line-height:20px;display:flex;align-items:center;gap:5px;padding-left:3px;white-space:nowrap;color:#505050}
.lbody li::before{content:"";width:14px;height:14px;flex:none;background:var(--c)}
.lbody .scroll i{height:20px}
.k1{--c:#4e79a7}.k2{--c:#a0cbe8}.k3{--c:#f28e2b}.k4{--c:#ffbe7d}.k5{--c:#59a14f}.k6{--c:#8cd17d}.k7{--c:#b6992d}.k8{--c:#f1ce63}.k9{--c:#499894}.k10{--c:#86bcb6}.k11{--c:#e15759}.k12{--c:#ff9d9a}.k13{--c:#79706e}.k14{--c:#bab0ac}.k15{--c:#d37295}.k16{--c:#fabfd2}.k17{--c:#b07aa1}.k18{--c:#d4a6c8}.k19{--c:#9d7660}.k20{--c:#d7b5a6}
.tabs{height:31px;flex:none;display:flex;background:#e5e5e5;border:1px solid #c9c9c9;border-width:1px 0;color:#6a6a6a;letter-spacing:-.25px}
.tabs span{width:57px;border-right:1px solid #c9c9c9;display:flex;align-items:center;justify-content:center;white-space:nowrap;padding-right:4px}
.tabs .t-src{width:131px;justify-content:flex-start;padding-left:9px;gap:5px}
.tabs .on{width:56px;background:#fafafa;color:#444;font-weight:500;padding:0 2px 2px 0}
.tabs .d{width:104px;gap:5px}
.tabs .t-src+.on~.d:nth-child(11){width:101px}
.tabs .st{width:71px;gap:5px}
.tabs .n{width:32px;padding:0}
.status{height:20px;flex:none;background:#ebebeb;display:flex;align-items:center;font-size:12px;padding-left:3px;color:#222;letter-spacing:-.4px}
.rc{margin-left:18px}
.user{margin-left:auto;width:111px;height:20px;border-left:1px solid #d0d0d0;display:flex;align-items:center;gap:9px;padding-left:5px}
.taskbar{height:62px;flex:none;display:flex;background:#662f25;color:#fff;font-family:"Open Sans","Noto Sans",sans-serif;box-shadow:inset 0 1px #4c0d06}
.start{width:48px;display:flex;align-items:center;justify-content:center}
.tsearch{width:344px;background:#6f3d33;color:#b79d97;font-size:15px;letter-spacing:-.42px;line-height:62px;padding-left:12px}
.tray{flex:1;display:flex;align-items:center;font-size:12px}
.split{margin-left:41px}
.desk{margin-left:7px;width:69px;padding-left:1px;letter-spacing:-.3px}
.nith{width:34px;display:flex;flex-direction:column;height:62px;padding-top:2px;line-height:16px}
.nith svg{margin-left:2px}
.nith span{margin-left:-5px}
.icons{margin-left:4px}
.clock{display:flex;flex-direction:column;align-items:center;line-height:22px;width:86px;padding-bottom:2px;letter-spacing:-.5px}
.peek{width:1px;height:62px;background:#8d665c}
.activate{position:absolute;left:1073px;top:630px;color:rgba(130,130,130,.6);font-family:"Open Sans","Noto Sans",sans-serif;display:flex;flex-direction:column;white-space:nowrap}
.activate b{font-weight:400;font-size:19px;line-height:24px}
.activate span{font-size:14px;line-height:20px}
```
